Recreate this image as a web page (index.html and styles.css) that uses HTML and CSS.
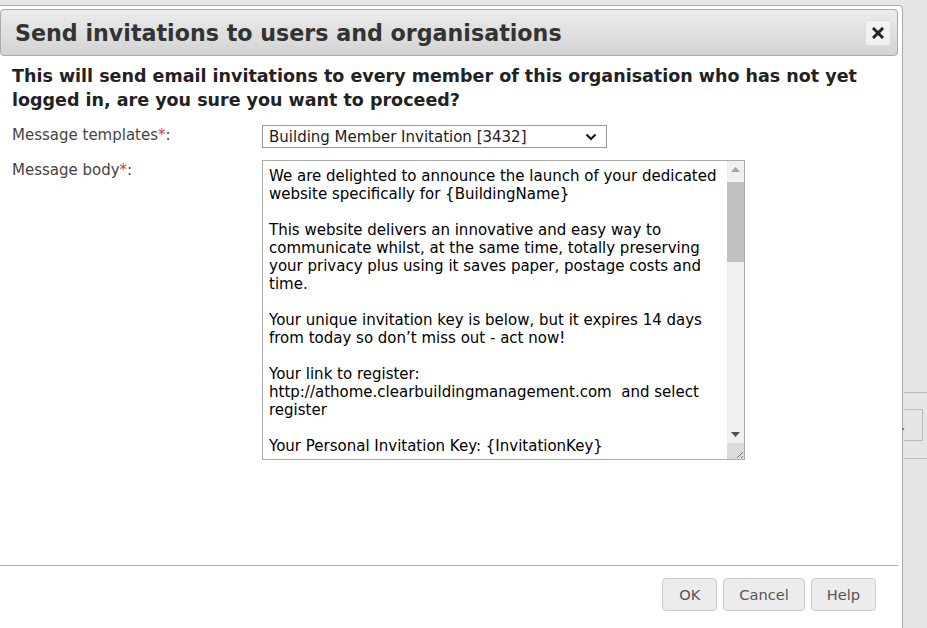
FILE: index.html
```html
<!DOCTYPE html>
<html lang="en">
<head>
<meta charset="utf-8"/>
<title>Send invitations</title>
<meta content="width=device-width, initial-scale=1.0" name="viewport"/>
<link rel="stylesheet" href="styles.css">
</head>
<body>
<div class="page">
  <div class="dialog">
    <div class="dialog-head">
      <h1>Send invitations to users and organisations</h1>
      <button class="close" title="Close">
        <svg width="12" height="12" viewBox="0 0 12 12"><path d="M2 2 L10 10 M10 2 L2 10" stroke="#222" stroke-width="3" stroke-linecap="square"/></svg>
      </button>
    </div>
    <div class="dialog-body">
      <p class="question">This will send email invitations to every member of this organisation who has not yet logged in, are you sure you want to proceed?</p>
      <div class="form-row">
        <label>Message templates<span class="req">*</span>:</label>
        <div class="select">
          <span>Building Member Invitation [3432]</span>
          <svg width="12" height="8" viewBox="0 0 12 8"><path d="M1.5 1.5 L6 6 L10.5 1.5" fill="none" stroke="#111" stroke-width="2.2"/></svg>
        </div>
      </div>
      <div class="form-row">
        <label>Message body<span class="req">*</span>:</label>
        <div class="textbox">
          <div class="textbox-text">We are delighted to announce the launch of your dedicated website specifically for {BuildingName}

This website delivers an innovative and easy way to communicate whilst, at the same time, totally preserving your privacy plus using it saves paper, postage costs and time.

Your unique invitation key is below, but it expires 14 days from today so don’t miss out - act now!

Your link to register:
http://athome.clearbuildingmanagement.com  and select register

Your Personal Invitation Key: {InvitationKey}</div>
          <div class="scrollbar">
            <div class="sb-arrow"><svg width="9" height="5" viewBox="0 0 9 5"><path d="M0 5 L4.5 0 L9 5 Z" fill="#a3a3a3"/></svg></div>
            <div class="sb-track">
              <div class="sb-thumb"></div>
            </div>
            <div class="sb-arrow"><svg width="9" height="5" viewBox="0 0 9 5"><path d="M0 0 L4.5 5 L9 0 Z" fill="#505050"/></svg></div>
            <div class="sb-corner"><svg width="10" height="10" viewBox="0 0 10 10"><path d="M9 3 L3 9 M9 7 L7 9" stroke="#777" stroke-width="1"/></svg></div>
          </div>
        </div>
      </div>
    </div>
    <div class="dialog-foot">
      <button class="btn">OK</button>
      <button class="btn">Cancel</button>
      <button class="btn">Help</button>
    </div>
  </div>
  <div class="behind">
    <div class="behind-row"></div>
    <div class="behind-box">.</div>
    <div class="behind-row"></div>
  </div>
</div>
</body>
</html>
```

FILE: styles.css
```css
body {
  margin: 0;
  background: #e6e6e6;
  font-family: "DejaVu Sans", Verdana, sans-serif;
  color: #333;
  overflow: hidden;
}
.page {
  display: flex;
  height: 628px;
}
.dialog {
  margin: 5px 0 0 -4px;
  width: 898px;
  height: 660px;
  flex: none;
  background: #fff;
  border: 1px solid #aaa;
  border-radius: 4px;
  padding: 3px 4px 0 3px;
  display: flex;
  flex-direction: column;
}
.dialog-head {
  display: flex;
  align-items: center;
  height: 45px;
  padding: 0 6px 0 14px;
  border: 1px solid #aaa;
  border-radius: 4px;
  background: linear-gradient(#ececec, #d3d3d3);
}
.dialog-head h1 {
  flex: 1;
  margin: 0;
  font-size: 22.2px;
  font-weight: bold;
  color: #333;
}
.close {
  width: 26px;
  height: 26px;
  padding: 0;
  border: 1px solid #ddd;
  border-radius: 3px;
  background: #f2f2f2;
  display: flex;
  align-items: center;
  justify-content: center;
}
.dialog-body {
  padding: 8px 12px 0 12px;
  height: 501px;
}
.question {
  margin: 0 0 13px 0;
  font-size: 17.5px;
  font-weight: bold;
  line-height: 24px;
  color: #222;
}
.form-row {
  display: flex;
  margin-bottom: 12px;
}
.form-row label {
  width: 250px;
  font-size: 15px;
  line-height: 20px;
  color: #444;
}
.req { color: #e33; }
.select {
  width: 328px;
  height: 21px;
  border: 1px solid #999;
  padding: 0 9px 0 6px;
  display: flex;
  align-items: center;
  justify-content: space-between;
  font-size: 15px;
  color: #222;
}
.textbox {
  width: 481px;
  height: 298px;
  border: 1px solid #aaa;
  display: flex;
}
.textbox-text {
  flex: 1;
  overflow: hidden;
  padding: 6px 6px 4px;
  font-size: 15px;
  line-height: 18px;
  color: #000;
  white-space: pre-wrap;
}
.scrollbar {
  width: 17px;
  display: flex;
  flex-direction: column;
  background: #f0f0f0;
}
.sb-arrow {
  height: 17px;
  display: flex;
  align-items: center;
  justify-content: center;
}
.sb-track {
  flex: 1;
  padding-top: 4px;
}
.sb-thumb {
  height: 80px;
  background: #c1c1c1;
}
.sb-corner {
  height: 16px;
  background: #dcdcdc;
  display: flex;
  align-items: flex-end;
  justify-content: flex-end;
}
.dialog-foot {
  border-top: 1px solid #aaa;
  display: flex;
  justify-content: flex-end;
  gap: 6px;
  padding: 12px 22px 0 0;
}
.btn {
  height: 33px;
  min-width: 55px;
  padding: 0 15px;
  border: 1px solid #ccc;
  border-radius: 4px;
  background: #ececec;
  font-family: "DejaVu Sans", Verdana, sans-serif;
  font-size: 14.6px;
  color: #555;
}
.behind {
  flex: 1;
  margin-left: 1px;
  padding-top: 392px;
}
.behind-row {
  height: 16px;
  border-top: 1px solid #bbb;
}
.behind-box {
  width: 18px;
  height: 30px;
  border: 1px solid #bbb;
  border-left: none;
  margin: 0 0 17px 0;
  font-size: 14px;
  line-height: 30px;
  color: #555;
  text-indent: -3px;
}
```
